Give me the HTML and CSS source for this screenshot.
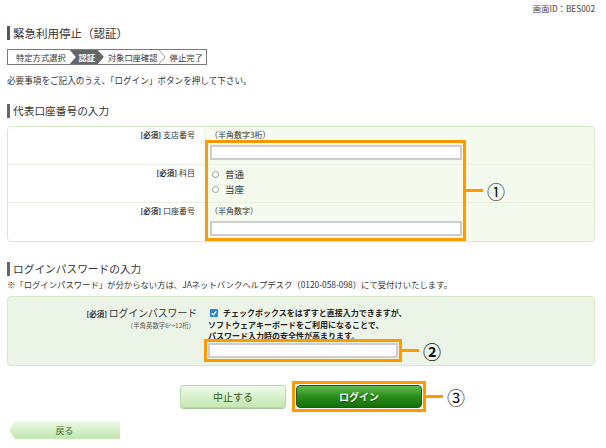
FILE: index.html
```html
<!DOCTYPE html>
<html lang="ja">
<head>
<meta charset="utf-8">
<title>緊急利用停止（認証）</title>
<link rel="stylesheet" href="styles.css">
</head>
<body>
<div class="screen-id">画面ID：BES002</div>
<h1 class="title">緊急利用停止（認証）</h1>
<div class="steps">
  <span class="step step1">特定方式選択</span>
  <span class="step current">認証</span>
  <span class="step step3">対象口座確認</span>
  <svg class="chev" width="8" height="14" viewBox="0 0 8 14"><polyline points="1,0 7,7 1,14" fill="none" stroke="#999" stroke-width="1"/></svg>
  <span class="step step4">停止完了</span>
</div>
<p class="lead">必要事項をご記入のうえ、「ログイン」ボタンを押して下さい。</p>

<h2 class="sec">代表口座番号の入力</h2>
<div class="panel form1">
  <div class="row">
    <div class="lab"><b>[必須]</b> 支店番号</div>
    <div class="field"><div class="hint">（半角数字3桁）</div><input class="txt" type="text"></div>
  </div>
  <div class="row">
    <div class="lab"><b>[必須]</b> 科目</div>
    <div class="field">
      <label class="radio"><svg width="7" height="7" viewBox="0 0 7 7"><circle cx="3.5" cy="3.5" r="3" fill="#fff" stroke="#8a8a8a" stroke-width="0.8"/></svg>普通</label>
      <label class="radio"><svg width="7" height="7" viewBox="0 0 7 7"><circle cx="3.5" cy="3.5" r="3" fill="#fff" stroke="#8a8a8a" stroke-width="0.8"/></svg>当座</label>
    </div>
  </div>
  <div class="row last">
    <div class="lab"><b>[必須]</b> 口座番号</div>
    <div class="field"><div class="hint">（半角数字）</div><input class="txt" type="text"></div>
  </div>
  <div class="mark1"><span class="callout">①</span></div>
</div>

<h2 class="sec sec2">ログインパスワードの入力</h2>
<p class="note">※「ログインパスワード」が分からない方は、JAネットバンクヘルプデスク（0120-058-098）にて受付けいたします。</p>
<div class="panel form2">
  <div class="lab2">
    <div class="main"><b>[必須]</b> <span>ログインパスワード</span></div>
    <div class="sub">（半角英数字6〜12桁）</div>
  </div>
  <div class="field2">
    <svg class="chk" width="8" height="8" viewBox="0 0 8 8"><rect x="0" y="0" width="8" height="8" rx="1" fill="#2f86c8"/><polyline points="1.8,4.2 3.4,5.8 6.3,2.3" fill="none" stroke="#fff" stroke-width="1.2"/></svg>チェックボックスをはずすと直接入力できますが、<br>ソフトウェアキーボードをご利用になることで、<br>パスワード入力時の安全性が高まります。
    <div class="pw-wrap"><input class="pw" type="password"><span class="callout">②</span></div>
  </div>
</div>

<div class="actions">
  <button class="btn-cancel" type="button">中止する</button>
  <div class="login-wrap"><button class="btn-login" type="button">ログイン</button><span class="callout">③</span></div>
</div>
<button class="back" type="button">戻る</button>
</body>
</html>
```
FILE: styles.css
```css
body {
  margin: 0;
  width: 606px;
  font-family: "Noto Sans CJK JP", "Noto Sans", sans-serif;
  color: #333;
  background: #fff;
}

.screen-id {
  height: 16px;
  line-height: 16px;
  font-size: 8.3px;
  text-align: right;
  padding-right: 11px;
  color: #444;
}

.title {
  margin: 10px 0 0 7px;
  padding-left: 3px;
  border-left: 3px solid #555;
  font-size: 11.5px;
  line-height: 14px;
  font-weight: normal;
}

.steps {
  display: flex;
  align-items: stretch;
  box-sizing: border-box;
  width: 200px;
  height: 16px;
  margin: 9px 0 0 7px;
  border: 1px solid #7a7a7a;
  font-size: 8.3px;
  line-height: 14px;
}
.step { white-space: nowrap; }
.step1 { padding: 0 4px 0 8px; }
.current {
  width: 34px;
  flex: none;
  text-align: center;
  background: #666;
  color: #fff;
  font-weight: bold;
  clip-path: polygon(0 0, 28px 0, 34px 50%, 28px 100%, 0 100%, 6px 50%);
}
.step3 { padding-left: 4px; }
.chev { flex: none; }
.step4 { padding-left: 4px; }

.lead {
  margin: 9px 0 0 7px;
  font-size: 8.6px;
  line-height: 12px;
}

.sec {
  margin: 18px 0 0 7px;
  padding-left: 3px;
  border-left: 3px solid #666;
  font-size: 10.7px;
  line-height: 14px;
  font-weight: normal;
}
.sec2 { margin-top: 20px; }

.note {
  margin: 2px 0 0 7px;
  font-size: 8.35px;
  line-height: 12px;
}

.panel {
  position: relative;
  margin: 8px 11px 0 7px;
  border: 1px solid #d4ebc6;
  border-radius: 4px;
}
.form1 {
  background: linear-gradient(to right, #fff 195px, #f4fbee 195px);
}
.row {
  display: grid;
  grid-template-columns: 195px 1fr;
  height: 37px;
  border-bottom: 1px solid #e6f1df;
}
.row.last {
  height: 38px;
  border-bottom: 0;
}
.lab {
  text-align: right;
  padding: 2px 8px 0 0;
  font-size: 8px;
  line-height: 12px;
}
.lab b { font-size: 7.5px; }
.field { padding: 2px 0 0 7px; }
.hint {
  font-size: 8px;
  line-height: 12px;
}
.txt {
  display: block;
  box-sizing: border-box;
  width: 252px;
  height: 15px;
  margin: 4px 0 0;
  padding: 0;
  border: 2px solid #cdcdcd;
  background: #fff;
}
.radio {
  display: flex;
  align-items: center;
  gap: 6px;
  padding-left: 2px;
  font-size: 9.5px;
  line-height: 15px;
}

.mark1 {
  position: absolute;
  left: 197px;
  top: 13px;
  width: 261px;
  height: 101px;
  box-sizing: border-box;
  border: 3px solid #f90;
}
.callout {
  position: absolute;
  top: 50%;
  left: calc(100% + 3px);
  margin-top: -10px;
  display: flex;
  align-items: center;
  height: 20px;
  font-size: 18px;
  line-height: 20px;
  color: #111;
  white-space: nowrap;
}
.callout::before {
  content: "";
  width: 17px;
  height: 3px;
  margin-right: 4px;
  background: #f90;
}

.form2 {
  display: grid;
  grid-template-columns: 200px 1fr;
  box-sizing: border-box;
  height: 70px;
  margin-top: 6px;
  background: #ecf4e8;
}
.lab2 {
  text-align: right;
  padding: 9px 11px 0 0;
}
.lab2 .main {
  line-height: 14px;
  font-size: 7.5px;
}
.lab2 .main span {
  font-size: 9.8px;
}
.lab2 .sub {
  font-size: 6.4px;
  line-height: 10px;
  padding-right: 2px;
  color: #555;
}
.field2 {
  padding-top: 10px;
  font-size: 8px;
  line-height: 11.5px;
  font-weight: bold;
  color: #222;
}
.chk {
  margin: 0 5px 0 2px;
  vertical-align: -1px;
}
.pw-wrap {
  position: relative;
  display: block;
  width: 190px;
  margin-top: 1.5px;
}
.pw {
  display: block;
  box-sizing: border-box;
  width: 190px;
  height: 15px;
  padding: 0;
  border: 2px solid #cdcdcd;
  background: #fff;
  outline: 3px solid #f90;
  outline-offset: 1px;
}
.pw-wrap .callout { left: calc(100% + 4px); }

.actions {
  display: flex;
  justify-content: center;
  align-items: center;
  gap: 6px;
  height: 31px;
  margin-top: 15px;
}
.btn-cancel,
.btn-login,
.back {
  font-family: "Noto Sans CJK JP", "Noto Sans", sans-serif;
  padding: 0;
  cursor: pointer;
}
.btn-cancel {
  width: 106px;
  height: 23px;
  border: 1px solid #b3d8a3;
  border-radius: 4px;
  background: linear-gradient(#effbea, #c3e7b3);
  box-shadow: 0 1px 0 #a9c79b;
  color: #2e5e1c;
  font-size: 10px;
}
.login-wrap {
  position: relative;
  display: flex;
  padding: 1px;
  border: 3px solid #f90;
}
.btn-login {
  width: 126px;
  height: 23px;
  border: 1px solid #245414;
  border-radius: 4px;
  background: linear-gradient(#62bb50, #2b8d1b 50%, #157006);
  color: #fff;
  font-size: 10px;
  font-weight: bold;
  text-shadow: 0 1px 1px #0a3a00;
}
.back {
  display: block;
  width: 111px;
  height: 18px;
  margin: 9px 0 0 9px;
  border: 0;
  background: linear-gradient(#ecfae5, #c0e5ae);
  color: #3a6a20;
  font-size: 9px;
  clip-path: polygon(6px 0, 100% 0, 100% 100%, 6px 100%, 0 50%);
}
```
